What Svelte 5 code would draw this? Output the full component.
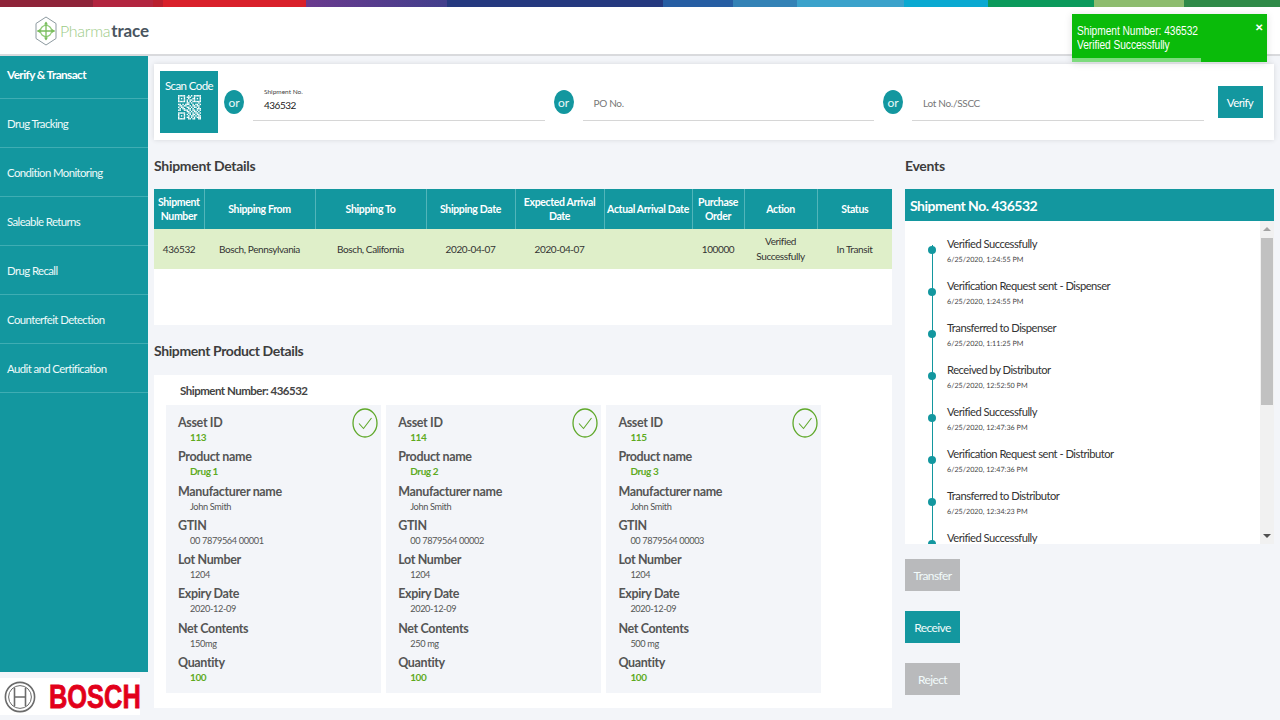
<script>
  const nav = ['Verify & Transact','Drug Tracking','Condition Monitoring','Saleable Returns','Drug Recall','Counterfeit Detection','Audit and Certification'];
  const heads = ['Shipment Number','Shipping From','Shipping To','Shipping Date','Expected Arrival Date','Actual Arrival Date','Purchase Order','Action','Status'];
  const row = ['436532','Bosch, Pennsylvania','Bosch, California','2020-04-07','2020-04-07','','100000','Verified Successfully','In Transit'];
  const cards = [
    {id:'113',drug:'Drug 1',gtin:'00 7879564 00001',net:'150mg'},
    {id:'114',drug:'Drug 2',gtin:'00 7879564 00002',net:'250 mg'},
    {id:'115',drug:'Drug 3',gtin:'00 7879564 00003',net:'500 mg'}
  ];
  const events = [
    ['Verified Successfully','6/25/2020, 1:24:55 PM'],
    ['Verification Request sent - Dispenser','6/25/2020, 1:24:55 PM'],
    ['Transferred to Dispenser','6/25/2020, 1:11:25 PM'],
    ['Received by Distributor','6/25/2020, 12:52:50 PM'],
    ['Verified Successfully','6/25/2020, 12:47:36 PM'],
    ['Verification Request sent - Distributor','6/25/2020, 12:47:36 PM'],
    ['Transferred to Distributor','6/25/2020, 12:34:23 PM'],
    ['Verified Successfully','']
  ];
  const qr = [
    '1111100101011111','1000101110010001','1010100100110101','1000101011010001','1111101010111111',
    '0000001101000010','1101011100101101','0110110010110110','1011001101011010','0101100110100111',
    '1100111010110101','0000001101011010','1111100110101101','1000101010110110','1010100101101011',
    '1000101101010111','1111100110110011','0000000000000000'
  ];
</script>

<div class="strip"></div>
<header class="top">
  <div class="brand">
    <svg class="hex" viewBox="0 0 22 30" width="22" height="30" aria-hidden="true">
      <path d="M11 1 L21 7.5 V22.5 L11 29 L1 22.5 V7.5 Z" fill="none" stroke="#8d9aa0" stroke-width="1"/>
      <circle cx="11" cy="15" r="5.6" fill="none" stroke="#8fcb76" stroke-width="1.3"/>
      <path d="M11 6.5 V23.5 M2.5 15 H19.5" stroke="#79bd5c" stroke-width="1.3"/>
      <path d="M11 5.5 l-2 3 h4 Z M11 24.5 l-2 -3 h4 Z M2 15 l3 -2 v4 Z M20 15 l-3 -2 v4 Z" fill="#79bd5c"/>
    </svg>
    <span class="pharma">Pharma</span><span class="trace">trace</span>
  </div>
  <div class="toast">
    <div class="toast-text">
      <div>Shipment Number: 436532</div>
      <div>Verified Successfully</div>
    </div>
    <span class="toast-x">✕</span>
    <span class="toast-bar"></span>
  </div>
</header>

<div class="layout">
  <aside class="side">
    <nav class="nav">
      {#each nav as item, i}
        <div class="nav-item" class:first={i === 0}>{item}</div>
      {/each}
    </nav>
    <div class="bosch">
      <svg viewBox="0 0 32 32" width="32" height="32" aria-hidden="true">
        <circle cx="16" cy="16" r="14.6" fill="none" stroke="#6b6b6b" stroke-width="1.6"/>
        <circle cx="16" cy="16" r="11.4" fill="none" stroke="#6b6b6b" stroke-width="1"/>
        <path d="M10.5 6.5 V25.5 M21.5 6.5 V25.5 M10.5 16 H21.5" fill="none" stroke="#6b6b6b" stroke-width="1.6"/>
      </svg>
      <span class="bosch-word">BOSCH</span>
    </div>
  </aside>

  <main class="main">
    <section class="search">
      <div class="scan">
        <span>Scan Code</span>
        <svg viewBox="0 0 16 18" width="23" height="28" aria-hidden="true">
          {#each qr as line, y}
            {#each line.split('') as c, x}
              {#if c === '1'}<rect {x} {y} width="1" height="1" fill="#fff"/>{/if}
            {/each}
          {/each}
        </svg>
      </div>
      <span class="or">or</span>
      <div class="field filled"><small>Shipment No.</small><b>436532</b></div>
      <span class="or">or</span>
      <div class="field"><em>PO No.</em></div>
      <span class="or">or</span>
      <div class="field"><em>Lot No./SSCC</em></div>
      <button class="verify">Verify</button>
    </section>

    <div class="columns">
      <div class="left">
        <h2>Shipment Details</h2>
        <div class="table-panel">
          <table>
            <thead><tr>{#each heads as h}<th>{h}</th>{/each}</tr></thead>
            <tbody><tr>{#each row as c}<td>{c}</td>{/each}</tr></tbody>
          </table>
        </div>

        <h2 class="second">Shipment Product Details</h2>
        <div class="products">
          <h3>Shipment Number: 436532</h3>
          <div class="cards">
            {#each cards as c}
              <article class="card">
                <svg class="tick" viewBox="0 0 26 30" width="26" height="30" aria-hidden="true">
                  <ellipse cx="13" cy="15" rx="12" ry="14" fill="none" stroke="#5fa82a" stroke-width="1.3"/>
                  <path d="M7 15.5 L11.5 20.5 L19.5 10" fill="none" stroke="#5fa82a" stroke-width="1.1"/>
                </svg>
                <dl>
                  <dt>Asset ID</dt><dd class="ok">{c.id}</dd>
                  <dt>Product name</dt><dd class="ok">{c.drug}</dd>
                  <dt>Manufacturer name</dt><dd>John Smith</dd>
                  <dt>GTIN</dt><dd>{c.gtin}</dd>
                  <dt>Lot Number</dt><dd>1204</dd>
                  <dt>Expiry Date</dt><dd>2020-12-09</dd>
                  <dt>Net Contents</dt><dd>{c.net}</dd>
                  <dt>Quantity</dt><dd class="ok">100</dd>
                </dl>
              </article>
            {/each}
          </div>
        </div>
      </div>

      <div class="right">
        <h2>Events</h2>
        <div class="ev-head">Shipment No. 436532</div>
        <div class="ev-body">
          <ul class="timeline">
            {#each events as e}
              <li><span class="ev-title">{e[0]}</span>{#if e[1]}<span class="ev-date">{e[1]}</span>{/if}</li>
            {/each}
          </ul>
          <div class="scrollbar">
            <span class="arrow up"></span>
            <span class="thumb"></span>
            <span class="arrow down"></span>
          </div>
        </div>
        <div class="actions">
          <button class="act off">Transfer</button>
          <button class="act">Receive</button>
          <button class="act off">Reject</button>
        </div>
      </div>
    </div>
  </main>
</div>

<style>
  :global(body) {
    margin: 0;
    background: #f3f5f9;
    font-family: Lato, "Open Sans", sans-serif;
    color: #333;
    overflow: hidden;
  }
  .strip {
    height: 7px;
    background: linear-gradient(90deg,
      #8e2439 0 93px, #b2253f 93px 153px, #b91f2e 153px 163px, #d9202a 163px 306px,
      #6a3a8e 306px, #423f8c 447px, #25397f 447px 663px, #275ea3 663px 733px,
      #3482b6 733px 797px, #3ba2cb 797px 904px, #0aa9d1 904px 988px, #0b9a5c 988px 1094px,
      #8dbc6e 1094px 1184px, #2f8a48 1184px);
  }
  .top {
    position: relative;
    height: 47px;
    background: #fff;
    border-bottom: 2px solid #d9dadd;
    display: flex;
    align-items: center;
    padding-left: 35px;
  }
  .brand { display: flex; align-items: center; }
  .hex { margin-right: 3px; }
  .pharma { color: #9ccb86; font-weight: 300; font-size: 16px; letter-spacing: -.3px; }
  .trace { color: #4a5560; font-weight: 700; font-size: 17px; margin-left: 1px; letter-spacing: -.1px; }
  .toast {
    position: absolute;
    left: 1072px;
    top: 7px;
    width: 195px;
    height: 48px;
    background: #0abb0a;
    color: #fff;
    font: 12px/14px "Liberation Sans", sans-serif;
    box-shadow: 0 1px 8px rgba(0,0,0,.12);
  }
  .toast-text { padding: 10px 0 0 5px; width: 190px; transform: scaleX(.85); transform-origin: 5px 0; letter-spacing: -.05px; }
  .toast-x { position: absolute; right: 4px; top: 7px; font-size: 10px; font-weight: 700; }
  .toast-bar { position: absolute; left: 0; bottom: 0; width: 129px; height: 4px; background: #7ddb7d; }

  .layout { display: flex; height: 664px; }
  .side { width: 148px; flex: none; display: flex; flex-direction: column; }
  .nav { flex: 1; background: #13979f; }
  .nav-item {
    height: 48px;
    border-bottom: 1px solid #3fadb3;
    display: flex;
    align-items: center;
    padding: 0 0 0 7px;
    color: #eefafa;
    font-size: 11.4px;
    letter-spacing: -.6px;
  }
  .nav-item.first { height: 37px; padding: 0 0 5px 7px; font-weight: 700; font-size: 11.8px; color: #fff; }
  .bosch {
    height: 37px;
    margin: 6px 8px 5px 0;
    background: #fff;
    display: flex;
    align-items: center;
    padding-left: 4px;
  }
  .bosch svg { flex: none; }
  .bosch-word {
    flex: none;
    width: 91px;
    margin-left: 13px;
    white-space: nowrap;
    color: #e2001a;
    font: 700 33px/1 "Liberation Sans", sans-serif;
    transform: scaleX(.77);
    transform-origin: left center;
    -webkit-text-stroke: .8px #e2001a;
  }

  .main { flex: 1; min-width: 0; padding: 8px 6px 0 6px; }
  .search {
    height: 76px;
    background: #fff;
    box-shadow: 0 0 5px rgba(0,0,0,.12);
    display: flex;
    align-items: center;
    padding: 0 11px 0 6px;
  }
  .scan {
    width: 58px;
    height: 62px;
    background: #13979f;
    color: #fff;
    font-size: 11.5px;
    letter-spacing: -.6px;
    display: flex;
    flex-direction: column;
    align-items: center;
    padding-top: 8px;
    box-sizing: border-box;
    gap: 2px;
    flex: none;
    margin-bottom: 1px;
  }
  .or {
    width: 20px;
    height: 24px;
    flex: none;
    border-radius: 50%;
    background: #13979f;
    color: #e8f8f8;
    font-size: 12px;
    display: flex;
    align-items: center;
    justify-content: center;
    margin: 0 9px 0 6px;
  }
  .field + .or { margin-left: 9px; }
  .field {
    width: 291.5px;
    height: 36px;
    flex: none;
    box-sizing: border-box;
    border-bottom: 1px solid #d6d6d6;
    padding-left: 11px;
    display: flex;
    flex-direction: column;
    justify-content: flex-end;
    margin-top: 2px;
  }
  .field small { font-size: 6.5px; color: #444; line-height: 8px; margin-bottom: 3px; }
  .field b { font-weight: 400; font-size: 10px; letter-spacing: -.5px; color: #222; line-height: 13px; padding-bottom: 8px; }
  .field em { font-style: normal; font-size: 10px; letter-spacing: -.3px; color: #777; line-height: 13px; padding-bottom: 10px; }
  .verify {
    width: 45px;
    height: 32px;
    margin-left: 14px;
    flex: none;
    border: 0;
    padding: 0;
    background: #13979f;
    color: #fff;
    font: 11.5px Lato, sans-serif;
    letter-spacing: -.6px;
  }

  .columns { display: flex; gap: 13px; }
  .left { width: 738px; flex: none; }
  .right { flex: 1; min-width: 0; }
  h2 {
    margin: 0;
    height: 48px;
    padding-top: 1px;
    display: flex;
    align-items: center;
    font-size: 14px;
    font-weight: 700;
    color: #3d3d3d;
    letter-spacing: -.3px;
  }
  h2.second { height: 50px; padding-top: 0; letter-spacing: -.4px; }
  .table-panel { height: 136px; background: #fff; }
  table { width: 100%; border-collapse: collapse; table-layout: fixed; }
  th {
    box-sizing: border-box;
    height: 40px;
    padding: 0 1px;
    background: #13979f;
    color: #fff;
    font-size: 10.5px;
    line-height: 14px;
    font-weight: 700;
    letter-spacing: -.35px;
    border-right: 1px solid #52b5ba;
  }
  th:last-child { border-right: 0; }
  th:nth-child(1) { width: 50px; } th:nth-child(2) { width: 111px; } th:nth-child(3) { width: 111px; }
  th:nth-child(4) { width: 89px; } th:nth-child(5) { width: 89px; } th:nth-child(6) { width: 88px; }
  th:nth-child(7) { width: 52px; } th:nth-child(8) { width: 73px; }
  td {
    box-sizing: border-box;
    height: 40px;
    padding: 0 4px;
    background: #dfefc9;
    text-align: center;
    font-size: 10px;
    line-height: 15px;
    color: #333;
    letter-spacing: -.4px;
  }
  .products { height: 333px; background: #fff; padding: 0 12px; box-sizing: border-box; }
  h3 {
    margin: 0;
    height: 30px;
    display: flex;
    align-items: center;
    padding-left: 14px;
    font-size: 11.5px;
    font-weight: 700;
    color: #444;
    letter-spacing: -.5px;
  }
  .cards { display: flex; gap: 5.7px; }
  .card {
    width: 214.5px;
    height: 288px;
    background: #f3f5f9;
    position: relative;
    padding: 8px 12px;
    box-sizing: border-box;
  }
  .tick { position: absolute; right: 2.5px; top: 3px; }
  dl { margin: 0; }
  dt {
    height: 19px;
    line-height: 19px;
    font-size: 12.5px;
    font-weight: 700;
    color: #555;
    letter-spacing: -.35px;
  }
  dd {
    margin: 0 0 0 12px;
    height: 15.3px;
    line-height: 11px;
    font-size: 9.2px;
    color: #555;
    letter-spacing: -.35px;
  }
  dd.ok { color: #5eaa1e; font-weight: 700; font-size: 10px; letter-spacing: -.4px; }

  .ev-head {
    height: 32px;
    background: #13979f;
    color: #fff;
    font-size: 14px;
    font-weight: 700;
    letter-spacing: -.5px;
    display: flex;
    align-items: center;
    padding-left: 5px;
  }
  .ev-body { height: 323px; background: #fff; display: flex; overflow: hidden; }
  .timeline {
    flex: 1;
    margin: 0;
    padding: 15px 0 0 42px;
    list-style: none;
    position: relative;
  }
  .timeline::before {
    content: '';
    position: absolute;
    left: 27px;
    top: 24px;
    bottom: 0;
    width: 1px;
    background: #13979f;
  }
  .timeline li { height: 42px; position: relative; display: flex; flex-direction: column; }
  .timeline li::before {
    content: '';
    position: absolute;
    left: -19px;
    top: 10px;
    width: 8px;
    height: 8px;
    border-radius: 50%;
    background: #13979f;
  }
  .ev-title { font-size: 11.2px; line-height: 16px; color: #333; letter-spacing: -.5px; }
  .ev-date { font-size: 7.2px; line-height: 16px; color: #444; text-rendering: geometricPrecision; }
  .scrollbar {
    width: 14px;
    flex: none;
    background: #f1f1f1;
    position: relative;
  }
  .thumb { position: absolute; left: 1px; right: 1px; top: 17px; height: 167px; background: #c1c1c1; }
  .arrow { position: absolute; left: 3px; border-left: 4px solid transparent; border-right: 4px solid transparent; }
  .arrow.up { top: 6px; border-bottom: 4px solid #a3a3a3; }
  .arrow.down { bottom: 6px; border-top: 4px solid #505050; }
  .actions { display: flex; flex-direction: column; gap: 20px; padding-top: 15px; align-items: flex-start; }
  .act {
    width: 55px;
    height: 32px;
    border: 0;
    padding: 0;
    background: #13979f;
    color: #f2fbfb;
    font: 12px Lato, sans-serif;
    letter-spacing: -.6px;
  }
  .act.off { background: #b9babc; }
</style>
